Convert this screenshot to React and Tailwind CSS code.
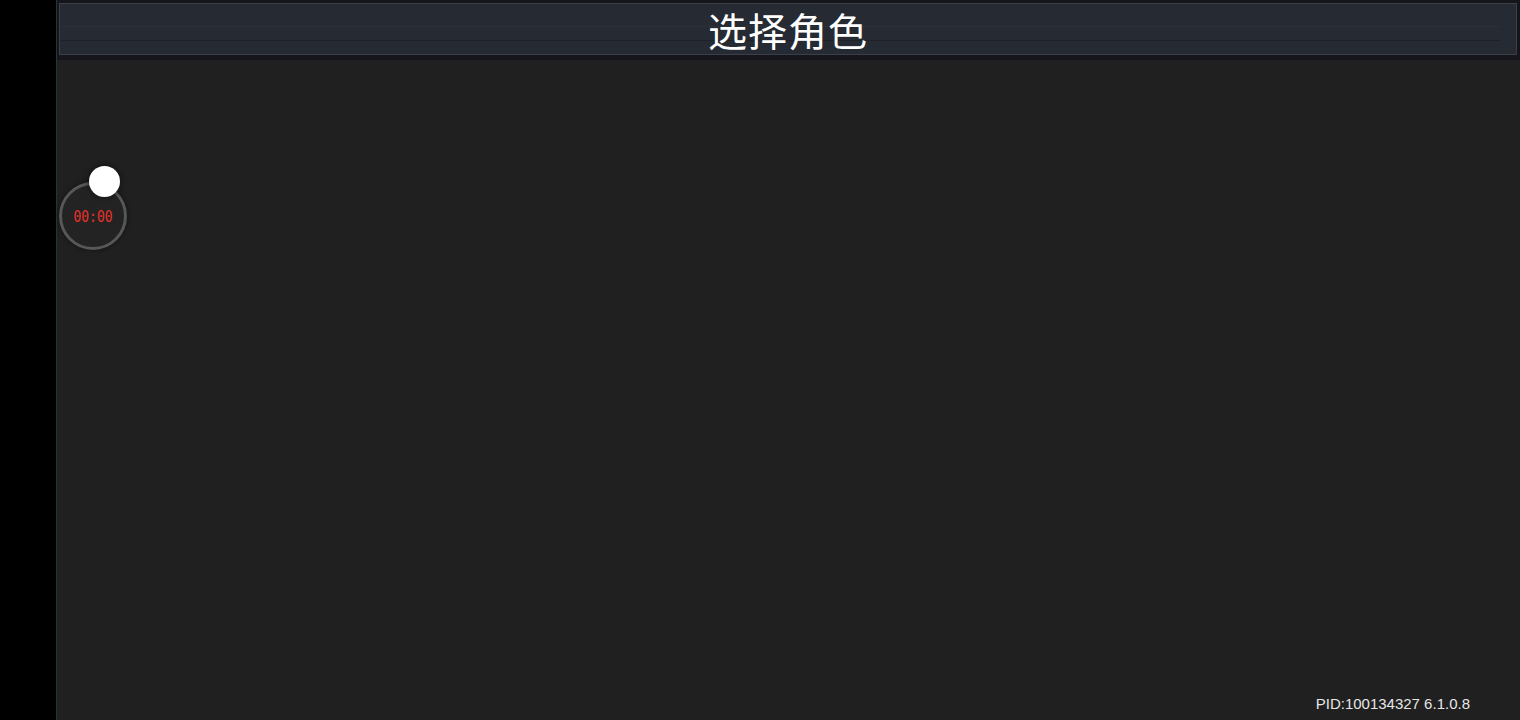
import React from "react";

const App = () => {
    return (
        <div
            className="flex w-[1520px] h-[720px] overflow-hidden bg-black"
            style={{ fontFamily: '"Noto Sans", "Noto Sans CJK SC", sans-serif' }}
        >
            {/* Left black strip */}
            <div className="w-[56px] h-full flex-none bg-black" />

            {/* Screen */}
            <div className="flex-1 flex flex-col h-full bg-[#202020] border-l border-[#1d3a30] relative">
                {/* Title bar */}
                <div className="flex-none h-[60px] bg-[#17151c] pt-[3px] pl-[2px] pr-[3px] pb-[5px]">
                    <div className="h-full bg-[#262a33] border border-[#3a3f48] flex items-center justify-center relative">
                        <div className="absolute left-[1px] right-[16px] top-[22px] h-px bg-[#2c3038]" />
                        <div className="absolute left-[1px] right-[16px] top-[36px] h-px bg-[#1e2128]" />
                        <span className="relative text-white text-[39px] leading-none tracking-[1px] mt-[2px]">
                            选择角色
                        </span>
                    </div>
                </div>

                {/* Content */}
                <div className="flex-1 flex flex-col">
                    <div className="pt-[123px] pl-[1px]">
                        <div className="relative w-[70px] h-[70px]">
                            <div className="absolute left-[1px] top-[-1px] w-[68px] h-[68px] rounded-full border-[3px] border-[#555855] bg-[#222322] shadow-[0_0_4px_rgba(0,0,0,0.5)] flex items-center justify-center">
                                <span
                                    className="text-[#e8322c] text-[13px] leading-none scale-y-125"
                                    style={{ fontFamily: '"DejaVu Sans Mono", monospace' }}
                                >
                                    00:00
                                </span>
                            </div>
                            <div className="absolute left-[31px] top-[-17px] w-[31px] h-[31px] rounded-full bg-white shadow-[0_0_6px_rgba(0,0,0,0.6)]" />
                        </div>
                    </div>
                    <div className="flex-1" />
                    <div className="flex justify-end pr-[50px] pb-[9px]">
                        <span
                            className="text-[#e6e6e6] text-[15px] leading-none"
                            style={{ fontFamily: '"Liberation Sans", Arial, sans-serif' }}
                        >
                            PID:100134327 6.1.0.8
                        </span>
                    </div>
                </div>
            </div>
        </div>
    );
};

export default App;
